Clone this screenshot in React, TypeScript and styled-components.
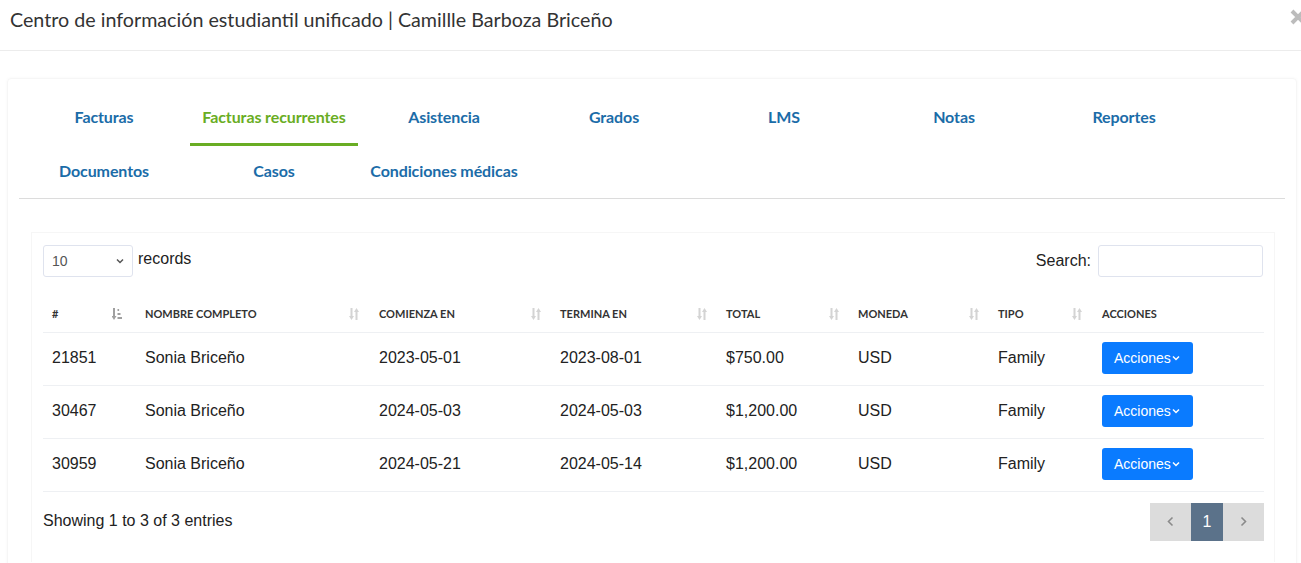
import React from "react";
import styled, { createGlobalStyle } from "styled-components";

const Global = createGlobalStyle`
  html, body { margin: 0; padding: 0; background: #fff; }
  body { font-family: "Liberation Sans", Arial, sans-serif; color: #333; overflow: hidden; }
  * { box-sizing: border-box; }
`;

const Page = styled.div`
  width: 1301px;
  height: 563px;
  overflow: hidden;
  position: relative;
`;

const Header = styled.header`
  height: 51px;
  border-bottom: 1px solid #ececec;
  display: flex;
  align-items: flex-start;
  padding: 7px 10px 0;
  position: relative;
`;

const Title = styled.h4`
  margin: 0;
  font-family: Lato, sans-serif;
  font-weight: 400;
  font-size: 19.7px;
  line-height: 26px;
  color: #333;
`;

const Close = styled.button`
  position: absolute;
  right: -5px;
  top: 9px;
  width: 16px;
  height: 16px;
  border: 0;
  padding: 0;
  background: transparent;
  display: flex;
`;

const Body = styled.div`
  padding: 27px 4px 0 7px;
`;

const Card = styled.div`
  border: 1px solid #f6f6f6;
  border-radius: 4px;
  box-shadow: 0 0 3px rgba(0, 0, 0, 0.04);
  padding: 11px 11px 0 11px;
  height: 490px;
`;

const TabList = styled.nav`
  display: flex;
  flex-wrap: wrap;
  border-bottom: 1px solid #dcdcdc;
`;

const Tab = styled.a<{ $active?: boolean }>`
  width: 170px;
  height: 54px;
  padding-bottom: 2px;
  display: flex;
  align-items: center;
  justify-content: center;
  font-family: Lato, sans-serif;
  font-weight: 700;
  font-size: 16px;
  letter-spacing: -0.1px;
  color: ${(p) => (p.$active ? "#69ad23" : "#1b6ca8")};
  position: relative;
  cursor: pointer;
  &::after {
    content: "";
    display: ${(p) => (p.$active ? "block" : "none")};
    position: absolute;
    left: 1px;
    right: 1px;
    bottom: -2px;
    height: 3px;
    background: #69ad23;
  }
`;

const Panel = styled.section`
  margin: 33px 10px 0 12px;
  border: 1px solid #f6f6f6;
  border-bottom: 0;
  padding: 12px 11px 0 11px;
  height: 330px;
`;

const Controls = styled.div`
  display: flex;
  justify-content: space-between;
  align-items: center;
`;

const Length = styled.label`
  display: flex;
  align-items: center;
  gap: 5px;
  font-size: 16px;
  color: #222;
  span { margin-top: -4px; }
`;

const SelectBox = styled.div`
  width: 90px;
  height: 32px;
  border: 1px solid #dfe3ee;
  border-radius: 3px;
  display: flex;
  align-items: center;
  justify-content: space-between;
  padding: 0 8px 0 8px;
  font-size: 14px;
  color: #555;
`;

const SearchLabel = styled.label`
  display: flex;
  align-items: center;
  gap: 7px;
  font-size: 16px;
  color: #222;
`;

const SearchInput = styled.input`
  width: 165px;
  height: 32px;
  border: 1px solid #dfe3ee;
  border-radius: 3px;
  outline: none;
`;

const Table = styled.table`
  width: 1221px;
  border-collapse: collapse;
  margin-top: 20px;
  table-layout: fixed;
`;

const Th = styled.th`
  font-family: Lato, sans-serif;
  font-weight: 700;
  font-size: 11px;
  color: #333;
  text-align: left;
  text-transform: uppercase;
  height: 35px;
  padding: 0 0 0 9px;
  border-bottom: 1px solid #eef0f3;
  vertical-align: middle;
`;

const ThInner = styled.div<{ $pr: number }>`
  display: flex;
  align-items: center;
  justify-content: space-between;
  padding-right: ${(p) => p.$pr}px;
  padding-bottom: 1px;
`;

const Td = styled.td`
  font-size: 16px;
  color: #222;
  height: 53px;
  padding: 0 0 1px 9px;
  border-bottom: 1px solid #eef0f3;
  vertical-align: middle;
`;

const ActionButton = styled.button`
  width: 91px;
  height: 32px;
  border: 0;
  border-radius: 3px;
  background: #0a7bff;
  color: #fff;
  font-family: "Liberation Sans", Arial, sans-serif;
  font-size: 14px;
  display: flex;
  align-items: center;
  padding: 0 0 0 12px;
  gap: 1px;
`;

const Footer = styled.div`
  display: flex;
  justify-content: space-between;
  align-items: center;
  margin-top: 11px;
`;

const Info = styled.div`
  font-size: 16px;
  color: #222;
  margin-top: -2px;
`;

const Pager = styled.div`
  display: flex;
  margin-right: -1px;
`;

const PageBtn = styled.button<{ $active?: boolean; $w: number }>`
  width: ${(p) => p.$w}px;
  height: 38px;
  border: 0;
  background: ${(p) => (p.$active ? "#5b728a" : "#dcdcdc")};
  color: ${(p) => (p.$active ? "#fff" : "#777")};
  font-family: "Liberation Sans", Arial, sans-serif;
  font-size: 16px;
  display: flex;
  align-items: center;
  justify-content: center;
  padding: 0;
`;

const SortBoth = () => (
  <svg width="10" height="12" viewBox="0 0 10 12">
    <g fill="#d4d4d4">
      <rect x="1.5" y="0" width="2" height="9" />
      <polygon points="0,8 5,8 2.5,12" />
      <rect x="6.5" y="3" width="2" height="9" />
      <polygon points="5,4 10,4 7.5,0" />
    </g>
  </svg>
);

const SortAsc = () => (
  <svg width="10" height="12" viewBox="0 0 10 12">
    <g fill="#a0a0a0">
      <rect x="1" y="0" width="2" height="9" />
      <polygon points="-0.5,8 4.5,8 2,12" />
      <rect x="5.5" y="1" width="1.6" height="2" />
      <rect x="5.5" y="5" width="3" height="2" />
      <rect x="5.5" y="9" width="4.5" height="2" />
    </g>
  </svg>
);

const Chevron = ({ color = "#fff" }: { color?: string }) => (
  <svg width="8" height="6" viewBox="0 0 8 6">
    <polyline points="1,1.5 4,4.5 7,1.5" fill="none" stroke={color} strokeWidth="1.5" />
  </svg>
);

const Arrow = ({ dir }: { dir: "l" | "r" }) => (
  <svg width="7" height="11" viewBox="0 0 7 11">
    <polyline
      points={dir === "l" ? "5.5,1.5 1.5,5.5 5.5,9.5" : "1.5,1.5 5.5,5.5 1.5,9.5"}
      fill="none"
      stroke="#8a8a8a"
      strokeWidth="1.6"
    />
  </svg>
);

const tabs1 = ["Facturas", "Facturas recurrentes", "Asistencia", "Grados", "LMS", "Notas", "Reportes"];
const tabs2 = ["Documentos", "Casos", "Condiciones médicas"];

const cols: { label: string; w: number; pr: number; icon?: "asc" | "both" }[] = [
  { label: "#", w: 93, pr: 14, icon: "asc" },
  { label: "Nombre completo", w: 234, pr: 11, icon: "both" },
  { label: "Comienza en", w: 181, pr: 10, icon: "both" },
  { label: "Termina en", w: 166, pr: 10, icon: "both" },
  { label: "Total", w: 132, pr: 10, icon: "both" },
  { label: "Moneda", w: 140, pr: 10, icon: "both" },
  { label: "Tipo", w: 104, pr: 11, icon: "both" },
  { label: "Acciones", w: 171, pr: 0 },
];

const rows = [
  ["21851", "Sonia Briceño", "2023-05-01", "2023-08-01", "$750.00", "USD", "Family"],
  ["30467", "Sonia Briceño", "2024-05-03", "2024-05-03", "$1,200.00", "USD", "Family"],
  ["30959", "Sonia Briceño", "2024-05-21", "2024-05-14", "$1,200.00", "USD", "Family"],
];

export default function App() {
  return (
    <Page>
      <Global />
      <Header>
        <Title>Centro de información estudiantil unificado | Camillle Barboza Briceño</Title>
        <Close aria-label="close">
          <svg width="16" height="16" viewBox="0 0 16 16">
            <path d="M2 2 L14 14 M14 2 L2 14" stroke="#bcbcbc" strokeWidth="4" strokeLinecap="butt" />
          </svg>
        </Close>
      </Header>
      <Body>
        <Card>
          <TabList>
            {tabs1.map((t) => (
              <Tab key={t} $active={t === "Facturas recurrentes"}>{t}</Tab>
            ))}
            {tabs2.map((t) => (
              <Tab key={t}>{t}</Tab>
            ))}
          </TabList>
          <Panel>
            <Controls>
              <Length>
                <SelectBox>
                  10 <Chevron color="#555" />
                </SelectBox>
                <span>records</span>
              </Length>
              <SearchLabel>
                Search:
                <SearchInput />
              </SearchLabel>
            </Controls>
            <Table>
              <colgroup>
                {cols.map((c) => (
                  <col key={c.label} style={{ width: c.w }} />
                ))}
              </colgroup>
              <thead>
                <tr>
                  {cols.map((c) => (
                    <Th key={c.label}>
                      <ThInner $pr={c.pr}>
                        <span>{c.label}</span>
                        {c.icon === "asc" && <SortAsc />}
                        {c.icon === "both" && <SortBoth />}
                      </ThInner>
                    </Th>
                  ))}
                </tr>
              </thead>
              <tbody>
                {rows.map((r) => (
                  <tr key={r[0]}>
                    {r.map((v, i) => (
                      <Td key={i}>{v}</Td>
                    ))}
                    <Td>
                      <ActionButton>
                        Acciones <Chevron />
                      </ActionButton>
                    </Td>
                  </tr>
                ))}
              </tbody>
            </Table>
            <Footer>
              <Info>Showing 1 to 3 of 3 entries</Info>
              <Pager>
                <PageBtn $w={41}><Arrow dir="l" /></PageBtn>
                <PageBtn $w={32} $active>1</PageBtn>
                <PageBtn $w={41}><Arrow dir="r" /></PageBtn>
              </Pager>
            </Footer>
          </Panel>
        </Card>
      </Body>
    </Page>
  );
}
